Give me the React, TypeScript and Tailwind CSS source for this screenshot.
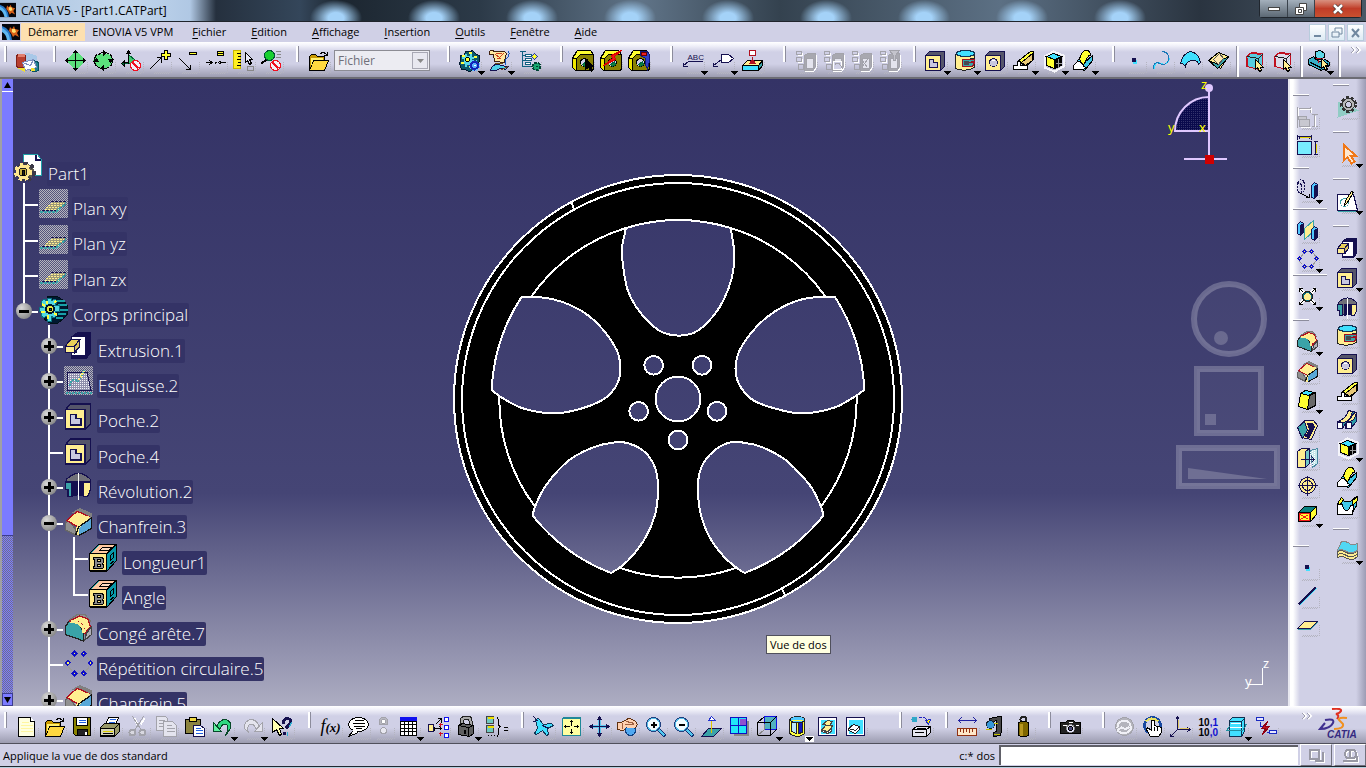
import type { ReactNode } from 'react';
import clsx from 'clsx';

const NAVY = '#15104f';
const CREAM = '#ffee90';
const CYAN = '#40e0ff';
const TEAL = '#3aa3a8';
const GREY = '#a3a3ab';

type PProps = { d: string; f?: string; s?: string; w?: number };

function P({ d, f = 'none', s = '#000', w = 1 }: PProps) {
    return <path d={d} fill={f} stroke={s} strokeWidth={w} />;
}

const spanner = (
    <>
        <P d="M0 7L5 0h13l3 4v15l-2 1H3l-3-3z" f="#8a8200" />
        <P d="M5 0h13l3 4H8L4 8H0z" f="#ffff30" />
        <P d="M0 8h4v12H3l-3-3z" f="#f0e800" />
        <circle cx="12" cy="12" r="4" fill="#d0d0e6" stroke="#000" />
        <P d="M10 14l4-3 1 3-3 2z" f="#10803c" s="#064" />
    </>
);

const greyTree = (
    <>
        <P d="M1 1h5v3H1zM1 7h5v4H1zM3 14h5v5H3z" s={GREY} />
        <P d="M9 5l3-2h8v13l-3 4h-8z" f="#a8a8b0" s={GREY} />
        <P d="M11 8h7v10h-7z" f="#e4e4ee" s={GREY} />
        <P d="M7 2v3H2M7 8v4H2M21 4v13l-3 4h-9" s="#fff" />
    </>
);

const dots = (
    <>
        <P d="M7 3h7M16 5l3 4M18 13l-3 4M8 18h5M5 16l-3-3M3 9l3-4" s="#9a9a9a" />
        {[[7, 3], [14, 3], [2, 10], [19, 10], [7, 18], [14, 18]].map(([x, y]) => (
            <g key={`${x}-${y}`}>
                <P d={`M${x - 1} ${y}l1-1 1 1-1 1z`} s="#1010c8" w={2} />
                <path d={`M${x - 0.5} ${y - 0.5}h1v1h-1z`} fill="#ffff50" />
            </g>
        ))}
    </>
);

const folder = (
    <>
        <P d="M1 20V6l2-2h4l2 2h7v4" f="#c89800" />
        <P d="M1 20L5 10h15l-4 10z" f="#ffd840" />
        <P d="M2 7h12v2H5L2 17z" f="#fff070" s="none" />
        <P d="M12 3c3-2 5-1 7 2M19 1v4h-4" />
    </>
);

const box = (fill: string) => (
    <>
        <P d="M2 6l5-4 11 1v11l-3 5-13-3z" f={fill} s="#c01020" />
        <P d="M3 6l11 2v10M14 8l4-4" s="#222" />
        <P d="M3 7v9M7 3l10 1" s="#c01020" />
        <P d="M11 9v10l2-2 2 4 2-1-1-3h3z" f={CREAM} />
    </>
);

const page = (
    <>
        <P d="M1 1h18v18H1z" f="#fff" s={NAVY} />
        <P d="M3 3h14v14H3z" f={CYAN} s="none" />
    </>
);

const noEntry = (
    <>
        <circle cx="14" cy="15" r="5" fill="#f4f0f8" stroke="#f01020" />
        <P d="M11 12l6 6" s="#f01020" w={2} />
    </>
);

const magnifier = (
    <>
        <P d="M12 12l8 8" s="#103070" w={4} />
        <P d="M12 12l7 7" s="#50c8f0" w={2} />
        <circle cx="8" cy="8" r="7" fill="#f4fbff" stroke="#204080" />
        <circle cx="8" cy="8" r="6" fill="none" stroke="#58c0e8" />
    </>
);

const icons: Record<string, ReactNode> = {
    catalogue: (
        <>
            <P d="M4 6l6-4 10 3v5H6z" f="#a8c8e8" s="none" />
            <P d="M0 5q5-3 9 0v11q-4 3-9 0z" f="#b84030" s="#802018" />
            <ellipse cx="5" cy="5" rx="4" ry="2" fill="#e08070" />
            <P d="M14 12q4-3 8 0v8q-4 2-8 0z" f="#208090" s="#0a5060" />
            <P d="M6 12l11-3 3 8-11 3z" f="#fff" s="#8090c0" />
            <P d="M6 12l8 3 3-6" s="#8090c0" />
            <P d="M1 18l7 3v-4zM14 17h3l2 3h-5z" f="#f0e030" s="none" />
        </>
    ),
    pan: (
        <>
            <P d="M10 0l10 10-10 10L0 10z" f="#5be07c" s="none" />
            <P d="M10 0v20M0 10h20" />
            <P d="M8 2l2-2 2 2zM8 18l2 2 2-2zM2 8l-2 2 2 2zM18 8l2 2-2 2z" f="#000" />
        </>
    ),
    turn: (
        <>
            <P d="M5 3h10l5 7-5 7H5l-5-7z" f="#5be07c" s="none" />
            <P d="M4 5q6-6 12-1M17 4q4 6 0 12M16 16q-6 5-12 0M3 16q-4-6 0-12" />
            <P d="M10 0l2 3-2 2zM15 9h5l-3 3zM10 20l-2-3 2-2zM0 11h5L3 8z" f="#000" />
        </>
    ),
    noFly: (
        <>
            <P d="M7 4v8L2 13h16L8 5z" f="#40c870" s="#063" />
            <P d="M7 0v13M5 3l2-3 2 3zM0 12h7M3 10l-3 3 3 3z" f="#063" />
            {noEntry}
        </>
    ),
    zoomPlus: <><P d="M0 19L12 7M7 7h5v5" /><P d="M12 3h3V0h3v3h3v3h-3v3h-3V6h-3z" f="#ffff30" /></>,
    zoomMinus: <><P d="M2 8l11 11M8 19h5v-5" /><P d="M12 2h7v2h-7z" f="#ffff30" /></>,
    approach: <><P d="M0 12h6M4 10l3 2-3 2M20 12h-6M16 10l-3 2 3 2M9 12h2M10 11v2" /><P d="M12 1h6v2h-6zM12 3h6v2h-6z" f="#ffff30" /></>,
    ruler: (
        <>
            <P d="M0 0h7v18H0z" f="#fff020" s="#c8b800" />
            <P d="M3 3h4M4 6h3M3 9h4M4 12h3M3 15h4" />
            <P d="M12 2v10l2-2 2 4 2-1-2-4h3z" f="#e8e8f8" />
            <P d="M14 16h6v4h-6z" s="#888" />
        </>
    ),
    greenZoom: (
        <>
            <circle cx="8" cy="5" r="5" fill="#18d030" stroke="#053" />
            <P d="M5 9l-5 4" w={2} />
            <P d="M14 1h5M15 4h4M14 7h5" s="#888" />
            {noEntry}
        </>
    ),
    folder,
    gears: (
        <>
            <P d="M6 1h5l2-1 4 4 3 1v6l-4 5-1 4-6 1-3-2H2l-2-6 1-3V5h4z" f="#0c5868" s="#021830" />
            <P d="M5 3h2v2h3V3h2v3h2v2h-2v3h2v2h-2v3h-2v-2H7v2H5v-3H2v-2h2V8H2V6h3z" f="#58d8e8" s="none" />
            <P d="M2 5h3M9 2h3M1 12h3M9 16h3M14 6h3" s="#ffff40" w={2} />
            <circle cx="8" cy="9" r="2" fill="#ffff30" stroke="#000" />
            <circle cx="15" cy="15" r="5" fill="#1828c0" stroke="#60c0ff" strokeDasharray="2 2" />
            <circle cx="15" cy="15" r="3" fill="#58b0ff" stroke="#1020b0" />
            <P d="M14 15h2" s="#fff" />
        </>
    ),
    scroll: (
        <>
            <P d="M0 1q2-2 5 0h9q4 0 2 5l-1 6-10-1-1-7H0z" f="#ffe8a0" s="#402010" />
            <P d="M6 4l4 3 4-4M7 8h4M6 3h6" s="#d04020" />
            <P d="M1 20q2-7 8-6 5 2 10 2l-3 3q-6-2-9 1z" f="#50d0e8" s={NAVY} />
            <P d="M12 19l7-3M5 13h8" s="#705010" />
            <P d="M19 1q2 4-3 8v5" s="#1858c0" />
        </>
    ),
    treeGear: (
        <>
            <P d="M0 1h6M3 1v15h8M3 5h4M3 10h4" s="#106080" />
            <P d="M6 4h6v2H6zM6 8h6v2H6zM6 12h5v2H6z" f="#fff" s="#106080" />
            <P d="M15 3l3 3-3 3-3-3z" f="#ffff30" s="#2030b0" />
            <circle cx="17" cy="16" r="4" fill="#18a870" stroke="#043" strokeWidth="2" strokeDasharray="3 1" />
            <P d="M16 16h2" s="#043" />
        </>
    ),
    nutArrow: <>{spanner}<P d="M13 9v10l3-2 3 4 1-1-2-4h3z" f="#000" /></>,
    nutFlash: <>{spanner}<P d="M21 0L11 5l1 3-9 7 12-6-1-3z" f="#f01818" s="#e00000" /></>,
    nutKnife: <>{spanner}<P d="M12 1q9-2 9 5t-2 13l-2-5V8l-5-3z" f="#3040c8" s="#101878" /><P d="M13 2h5v3h-5z" f="#f02020" s="#600" /></>,
    textNote: (
        <>
            <text x="5" y="9" fontSize="8" fontFamily="Liberation Sans" fill={NAVY}>ABC</text>
            <P d="M20 11H6l-5 4M1 12v4h4" s={NAVY} />
        </>
    ),
    flagNote: <><P d="M9 4h7l5 4-5 4H9z" f="#fff" s={NAVY} /><P d="M9 9L1 15M1 12v4h4" s={NAVY} /></>,
    datum: (
        <>
            <P d="M7 0h6v5H7z" f="#fff" s="#b01020" />
            <P d="M10 6v3" s="#b01020" />
            <P d="M0 15l5-5h15l-4 5z" f={CREAM} />
            <P d="M7 13h6l-3-4z" f="#b01020" s="#b01020" />
            <P d="M0 15h16v5H0z" f={CYAN} />
            <P d="M16 15l4-5v5l-4 5z" f={TEAL} />
        </>
    ),
    greyTree,
    greyTree2: <>{greyTree}<P d="M10 11h8v8h-8z" f="#d0d0e6" s="#fff" /><P d="M11 15q3-5 6 0t3 4" s={GREY} /></>,
    greyTree3: <>{greyTree}<P d="M10 9l6 8M16 9l-6 8" s={GREY} /></>,
    greyTree4: <>{greyTree}<P d="M10 0h10l-4 5v5h-2V5z" f="#c4c4cc" s={GREY} /></>,
    pocket: (
        <>
            <P d="M1 4l3-3h15v15l-3 3z" f="#55556a" s={NAVY} />
            <P d="M0 5h15v15H0z" f={CREAM} s={NAVY} />
            <P d="M4 9h4v3h4v5H4z" f="#c8c8e0" s={NAVY} />
        </>
    ),
    groove: (
        <>
            <P d="M0 4h19v4l-8 1v5l8-1v4q-9 5-19 1z" f={CREAM} s="#222" />
            <ellipse cx="10" cy="3" rx="9" ry="3" fill={CYAN} stroke="#135" />
            <P d="M7 9h12v2l-6 1h6l-2 4H7z" f={TEAL} s="#a01020" />
            <P d="M8 10h5v4H8z" f="#484850" s="none" />
        </>
    ),
    hole: (
        <>
            <P d="M1 4l3-3h15v15l-3 3z" f="#55556a" s={NAVY} />
            <P d="M0 5h15v15H0z" f={CREAM} s={NAVY} />
            <circle cx="8" cy="12" r="4" fill="#c8c8e0" stroke={NAVY} />
            <P d="M6 10h3" s="#fff" />
        </>
    ),
    stiffener: (
        <>
            <P d="M4 11L17 1h3v8l-7 7z" f="#ffff40" />
            <P d="M8 12L19 3v7l-7 5z" f="#e8c878" />
            <P d="M0 19v-4h4v-4h3v4h7v4z" f="#fff" />
        </>
    ),
    cube: (
        <>
            <P d="M1 6l9-5 10 4v11l-9 5-10-4z" s="#f4f4fa" w={2} />
            <P d="M3 6l7-3 8 3-7 3z" f={CYAN} />
            <P d="M3 6l8 3v9l-8-3z" f="#ffff30" />
            <P d="M11 9l7-3v9l-7 3z" f="#000" />
            <P d="M12 13h6M15 8v9" s="#999" />
        </>
    ),
    loft: (
        <>
            <P d="M0 16L8 5l3 7 8-7v5L11 20z" f="#40c8e8" />
            <P d="M6 9q2-9 7-9 4 0 4 5-2-1-4 4t-4 5z" f="#ffff30" />
            <P d="M0 15l4-4q5 0 6 5l3 1-3 2H0z" f="#fff" />
        </>
    ),
    point: <><P d="M10 10h2v3H9z" f={CYAN} s={CYAN} /><P d="M8 8h3v3H8z" f={NAVY} s={NAVY} /></>,
    spline: <><P d="M2 18q0-5 4-6l6 2q4-2 5-6" s={CYAN} /><P d="M1 19q-1-6 4-7 5 3 9 1 3-3 2-8-2-4-7-4" s="#1878b8" /></>,
    surface: <P d="M0 13Q2 3 10 1q9 2 10 11l-2 2q-1-5-7-4t-6 7q-1-4-5-4z" f={CYAN} s="#113" />,
    diamondBox: (
        <>
            <P d="M0 10L10 2l10 4-8 12z" f={CREAM} />
            <P d="M0 10l9 8 11-11-5 1-5 6z" f={TEAL} />
            <P d="M5 9l6-6 4 5-5 6z" f="#ffe8b0" s="#555" />
        </>
    ),
    boxCyan: box('#58cce0'),
    boxGrey: box('#dcdcea'),
    assembly: (
        <>
            <P d="M0 9l5-3 6 5 6-2 4 3v3l-8 5-13-6z" f="#38b0c8" />
            <P d="M2 12l10 5 8-4M6 8l6 4" />
            <P d="M7 1l5-1 4 3v4l-5 2-4-2z" f="#60d8e8" />
            <P d="M7 8h7M10 9v3" s="#c01020" />
            <P d="M13 8v10l2-2 2 4 2-1-2-4h3z" f={CREAM} />
        </>
    ),
    pad: (
        <>
            <P d="M5 4l4-3h10v15l-3 4H5z" f={NAVY} s={NAVY} />
            <P d="M5 4h10v14H5z" f="#fff" s="none" />
            <P d="M0 11l4-5h7l-3 5v5H0z" f="#e8cf58" s={NAVY} />
            <P d="M0 11h7v5H0z" f={CREAM} s={NAVY} />
            <P d="M7 11l4-5v5l-4 5z" f="#d8c060" s={NAVY} />
        </>
    ),
    shaft: (
        <>
            <P d="M1 5q9-9 18 0v3h-4v9h-4V7H8v10H5V8H1z" f="#707078" s={NAVY} />
            <P d="M0 7h5v11H2v-5H0z" f={TEAL} s={NAVY} />
            <P d="M6 6h7l1 12-3-2-3 2H6z" f={NAVY} s="none" />
            <P d="M14 7h5v6l-2 5h-3z" f={CREAM} s={NAVY} />
            <P d="M10 0v21" s="#fff" />
        </>
    ),
    rib: (
        <>
            <P d="M0 12q8-2 11-11l8 2v9l-6 7H8v-5l-3 5H0z" f="#2a9aa8" s={NAVY} />
            <P d="M0 12q8-2 11-11l4 1Q13 12 6 13z" f={CREAM} s={NAVY} />
            <P d="M9 12q5-3 7-8l3-1q-1 7-6 9z" f={CREAM} s={NAVY} />
            <P d="M0 13h5v6H0zM9 13h5v6H9z" f="#fff" s={NAVY} />
        </>
    ),
    removeLoft: (
        <>
            <P d="M0 8l4-6 3 4h6l6-5v9l-5 9H0z" f="#40c8e8" />
            <P d="M0 19V9l5 0q1 6 4 6t4-5h3l-1 9z" f="#fff" />
            <P d="M0 8l4-6 2 2-3 5zM15 5l5-4v4l-5 5z" f="#ffff30" />
        </>
    ),
    thick: (
        <>
            <P d="M0 11q5-2 9 1t11-1v5q-5 5-10 2t-10-1z" f={CREAM} s="#555" />
            <P d="M0 14q5-2 9 1t11-1" s="#555" />
            <P d="M0 10l4-9q6 0 8 2t8 0v7q-6 4-11 1t-9-1z" f="#50d8f4" s="#888" />
        </>
    ),
    gearPlane: (
        <>
            <P d="M0 5l22 9-22 7z" f="#90ccc4" s="none" />
            <circle cx="11" cy="8" r="7" fill="none" stroke="#333" strokeWidth="3" strokeDasharray="3 2" />
            <circle cx="11" cy="8" r="6" fill="#b8b8b8" stroke="#333" />
            <circle cx="11" cy="8" r="3" fill="#d0d0e6" stroke="#333" />
        </>
    ),
    select: <P d="M6 1v16l4-3 4 6 3-2-4-6h5z" f="#ffe8d0" s="#f07818" w={2} />,
    sketch: (
        <>
            <P d="M0 4h16l4 16H0z" f="#fff" s={NAVY} />
            <P d="M0 21h21" s={TEAL} />
            <circle cx="7" cy="12" r="4" fill="none" stroke={TEAL} />
            <P d="M7 15l1-5 6-9 2 1-6 10z" f={CREAM} />
        </>
    ),
    greyDims: (
        <>
            <P d="M0 0v21M13 0v6M0 2h13M14 8h6M14 20h6M17 8v12" s={GREY} />
            <P d="M1 10h8v3H1zM2 13h10v7H2z" f="#c8c8d0" s={GREY} />
            <P d="M1 1v8M14 1v5M2 3h11M3 21h10M18 9v11" s="#fff" />
        </>
    ),
    dims: (
        <>
            <P d="M0 0v5M14 0v5M0 2h14M2 1v3M12 1v3M16 7h4M16 20h4M18 7v13" s={NAVY} />
            <P d="M0 7h14v13H0z" f="#78ecff" s={NAVY} />
            <P d="M19 9v9M2 3h11" s="#e0d000" />
        </>
    ),
    translate: (
        <>
            <path d="M0 3l3-3 4 2v9l-3 3-4-2zM4 5v9M0 3l4 2 3-3" fill="none" stroke={NAVY} strokeDasharray="2 1" />
            <P d="M3 14l9 4M12 14v4H8" />
            <P d="M14 6l3-3 3 2v11l-3 3-3-1z" f="#50c8ff" s={NAVY} />
            <P d="M17 7l3-2v11l-3 3z" f={NAVY} s={NAVY} />
        </>
    ),
    mirror: (
        <>
            <P d="M0 4l3-3 3 2v9l-3 3-3-2z" f="#50c8ff" s={NAVY} />
            <P d="M3 5l3-2v9l-3 3z" f={NAVY} s={NAVY} />
            <P d="M7 8l9-8v11l-9 8z" f={CREAM} s={TEAL} />
            <P d="M14 9l3-3 3 2v9l-3 3-3-2z" f="#50c8ff" s={NAVY} />
            <P d="M17 10l3-2v9l-3 3z" f={NAVY} s={NAVY} />
        </>
    ),
    dots,
    scale: (
        <>
            <P d="M2 2l16 16M18 2L2 18" s="#fff" w={3} />
            <P d="M2 2l4 4M18 2l-4 4M2 18l4-4M18 18l-4-4M2 5V2h3M15 2h3v3M2 15v3h3M15 18h3v-3" />
            <circle cx="10" cy="10" r="5" fill="#087080" stroke="#222" />
            <circle cx="10" cy="10" r="3" fill={CREAM} stroke={CREAM} />
        </>
    ),
    fillet: (
        <>
            <P d="M3 4l6-4h6l4 5-2 3z" f="#909090" s="#777" />
            <P d="M0 9l3-4 7 1 4 8v6L0 15z" f={TEAL} s="#222" />
            <P d="M3 5l8-4 6 2 2 6-4 5q-1-8-7-9z" f={CREAM} s="#b01020" />
            <P d="M14 14q0-6-5-8l-5-1" s={CREAM} w={2} />
            <P d="M15 19l5-4v-6l-4 5z" f="#b0b0b8" s="#444" />
        </>
    ),
    chamfer: (
        <>
            <P d="M6 3l5-3 9 4v3z" f="#808080" s="#808080" />
            <P d="M0 11l2-3 6 8v4l-8-4z" f="#909090" s="#666" />
            <P d="M1 9l8-7 9 4-8 8z" f={CREAM} s="#b01020" />
            <P d="M10 14l10-7v8l-9 5-3-1z" f="#58a8d8" s="#111" />
            <P d="M18 6l-9 9v5" s={CREAM} w={2} />
            <P d="M8 20l2-6 10-7" s="#111" />
        </>
    ),
    draft: (
        <>
            <P d="M3 4l5-3 9 2-6 3z" f={CYAN} />
            <P d="M3 4l9 2-2 14-9-3z" f="#ffff30" />
            <P d="M12 6l6-3v13l-8 4z" f="#686868" />
        </>
    ),
    shell: (
        <>
            <P d="M0 8l7-7h9l4 5-6 14-10-2z" f={CREAM} s={NAVY} />
            <P d="M0 8l7-6 3 9-5 8z" f={TEAL} s={NAVY} />
            <P d="M10 4h5l2 3-5 11-4-1 4-7z" f={NAVY} s={NAVY} />
        </>
    ),
    thickness: (
        <>
            <P d="M0 4l4-3h8l-4 3v16H0z" f={CREAM} s={NAVY} />
            <P d="M8 4l4-3v15l-4 4z" f="#70c8c8" s={NAVY} />
            <P d="M13 3l7-2v15l-5 4z" f="#c8e8ec" s="#4888a0" />
            <path d="M13 4v15M15 3v16M17 2v16" stroke="#fff" strokeDasharray="1 1" />
            <P d="M3 12h14M14 9l3 3-3 3" s={NAVY} />
        </>
    ),
    target: (
        <>
            <circle cx="10" cy="10" r="8" fill={CREAM} stroke={NAVY} />
            <circle cx="10" cy="10" r="5" fill="none" stroke={NAVY} />
            <P d="M10 0v20M0 10h20" s={NAVY} />
        </>
    ),
    deleteFace: (
        <>
            <P d="M1 9l6-6h12l-6 6z" f="#088080" />
            <P d="M13 9l6-6v8l-6 7z" f="#ffff30" />
            <P d="M1 9h12v9H1z" f="#ffff30" />
            <P d="M3 11l8 5M11 11l-8 5M2 10h10v7H2z" s="#f01818" />
        </>
    ),
    line: <><P d="M2 20L19 3" s={CYAN} /><P d="M1 19L18 2" s={NAVY} w={2} /></>,
    plane: <><P d="M0 15l7-7h13l-7 7z" f={CREAM} s={NAVY} /><P d="M0 16h13l7-7" s={TEAL} /></>,
    newDoc: <><P d="M2 1h12l4 4v15H2z" f="#ffffe0" /><P d="M14 1v4h4" f="#fff" /><P d="M5 6h7M4 9h12M4 12h12M4 15h12" s="#fff6a0" /></>,
    save: (
        <>
            <P d="M1 1h17v18H3l-2-2z" f="#8c8400" />
            <P d="M4 1h11v8H4z" f="#fff" />
            <P d="M6 4h7M6 6h7" s="#2060e0" />
            <P d="M5 13h10v6H5z" f="#222" />
            <P d="M12 15h2v3h-2z" f="#fff" s="none" />
        </>
    ),
    print: (
        <>
            <P d="M5 8l3-7h10l-3 7z" f="#fff" />
            <P d="M9 3h6M8 6h6" s="#2060e0" />
            <P d="M0 11l4-4h15v8l-5 5H0z" f="#989868" />
            <P d="M0 12h14v7H0zM14 12l5-5" f="#d8d8b8" />
            <P d="M2 15h10" s="#e0d000" />
            <P d="M2 17h10" />
        </>
    ),
    cut: (
        <>
            <P d="M6 2l3 6M16 2l-4 6" s="#fff" w={2} />
            <P d="M4 0l9 14M15 0L6 14" s={GREY} />
            <circle cx="4" cy="16" r="3" fill="#d8d8e0" stroke={GREY} strokeWidth="2" />
            <circle cx="14" cy="16" r="3" fill="#d8d8e0" stroke={GREY} strokeWidth="2" />
        </>
    ),
    copy: (
        <>
            <P d="M0 0h9l2 2v12H0z" f="#e4e4ee" s={GREY} />
            <P d="M2 4h6M2 7h6M2 10h6" s={GREY} />
            <P d="M7 5h9l4 4v11H7z" f="#e4e4ee" s={GREY} />
            <P d="M10 9h5M10 12h8M10 15h8" s={GREY} />
        </>
    ),
    paste: (
        <>
            <P d="M1 3h15v14H1z" f="#8c8440" />
            <P d="M5 1h7v4H5z" f="#f0d840" />
            <P d="M9 9h7l4 3v8H9z" f="#fff" s={NAVY} />
            <P d="M11 12h5M11 14h7M11 17h7" s="#2060e0" />
        </>
    ),
    undo: <><P d="M4 10q3-7 9-7 7 2 5 9l-5 7q4-8 1-11-4-2-7 5" f="#30d880" s="#064828" /><P d="M1 6v9h8z" f="#60f0a0" s="#064828" /></>,
    redo: <><P d="M17 10q-3-7-9-7-7 2-6 9l4 4q-2-6 1-8 4-2 7 5" f="#e4e4ee" s={GREY} /><P d="M20 6v9h-8z" f="#e4e4ee" s={GREY} /></>,
    help: (
        <>
            <P d="M0 2v14l4-3 3 6 2-1-2-6h4z" f="#ffffb0" />
            <P d="M11 7q0-5 4-5 5 1 2 6l-4 4M12 15v3" s={NAVY} w={3} />
            <P d="M19 5q0 3-3 6M15 15v4" s="#30b0d0" />
        </>
    ),
    formula: <text x="0" y="15" fontSize="18" fontStyle="italic" fontFamily="Liberation Serif" fill="#000">f<tspan fontSize="13" fontWeight="bold">(x)</tspan></text>,
    comment: <><P d="M5 14l-5 6 10-4" f="#fff" /><ellipse cx="10" cy="8" rx="10" ry="7" fill="#fff" stroke="#000" /><P d="M6 4h9M4 7h12M5 10h11M7 12h6" /><P d="M5 13l4 2" s="#fff" w={2} /></>,
    greyLight: <><P d="M7 8V3l2-2h4l2 2v5z" f="#b8b8c0" s={GREY} /><circle cx="11" cy="5" r="2" fill="#fff" stroke={GREY} /><circle cx="11" cy="14" r="3" fill="#e8e8f0" stroke={GREY} /></>,
    table: <><P d="M2 1h16v3H2z" f="#1010f0" s="#1010f0" /><P d="M2 5h16v14H2zM6 5v14M10 5v14M14 5v14M2 8h16M2 12h16M2 15h16" f="#fff" /></>,
    relations: (
        <>
            <P d="M0 8h5v7H0z" f={CREAM} s={NAVY} />
            <P d="M7 8l6-6M13 6V2h-4M6 12h7M11 10l2 2-2 2M6 10v4" />
            <P d="M16 1h4v4h-4zM16 9h4v4h-4zM16 17h4v4h-4z" f="#fff" s="#1010f0" />
            <P d="M12 6v4M10 8h4M12 15v4M10 17h4" s="#d01020" />
        </>
    ),
    lock: (
        <>
            <P d="M5 9V4q1-3 5-3t4 3v5" s="#222" w={4} />
            <P d="M5 9V4q1-3 5-3t4 3v5" s="#aaa" w={2} />
            <P d="M2 9l4-2 11 2v8l-4 3-11-2z" f="#606060" />
            <P d="M2 9l10 2v9M12 11l5-2" />
            <P d="M8 13v4" w={2} />
        </>
    ),
    braces: (
        <>
            <P d="M0 0h7v7H0zM0 9h7v7H0z" f="#70c8c0" s="#444" />
            <P d="M1 1h6M1 10h6" s="#f0e000" w={2} />
            <P d="M10 1q2 0 2 5 0 4 2 4-2 0-2 5 0 5-2 5M17 11h4M17 14h4M1 19h1M4 19h1M7 19h1" />
        </>
    ),
    fly: (
        <>
            <P d="M2 3l3-1 5 6 8-1 2 2-6 3 1 6-2 1-4-5-6 4-2-1 3-5z" f={CYAN} s="#103858" />
            <P d="M0 0l4 4M0 5l5-1M9 9l6 3" s={NAVY} />
        </>
    ),
    fitAll: (
        <>
            <P d="M1 2h18v17H1z" f="#ffffa0" s="#208898" />
            <P d="M1 1h18" s="#208898" />
            <P d="M10 4v5M10 12v5M3 10h5M12 10h5M9 5l1-1 1 1zM9 16l1 1 1-1zM4 9l-1 1 1 1zM16 9l1 1-1 1z" f="#000" />
        </>
    ),
    panBlue: (
        <>
            <P d="M10 1v18M1 10h18" s="#60c8f0" w={3} />
            <P d="M10 1v18M1 10h18" s={NAVY} />
            <P d="M8 3l2-3 2 3zM8 17l2 3 2-3zM3 8l-3 2 3 2zM17 8l3 2-3 2z" f={NAVY} s={NAVY} />
        </>
    ),
    hand: (
        <>
            <P d="M0 6h4l7-4q7 1 9 6-2 5-8 4l-7 2-5-1z" f="#ffd0b0" s="#603010" />
            <P d="M7 8h9M9 5l8 2M5 6v6" s="#a06040" />
            <circle cx="13" cy="14" r="5" fill="#50a8f0" stroke="#104080" />
            <P d="M9 10h8" s="#ffd0b0" w={3} />
        </>
    ),
    zoomIn: <>{magnifier}<P d="M5 8h6M8 5v6" w={2} /></>,
    zoomOut: <>{magnifier}<P d="M5 8h6" w={2} /></>,
    normal: <><P d="M0 20l7-8h13l-8 8z" f={TEAL} s={NAVY} /><P d="M10 16V4" s="#e0c800" /><P d="M7 4l3-4 4 4z" f="#fff" s="#2030d0" /></>,
    multiView: (
        <>
            <P d="M5 5h14v14H5z" f="#888" s="#888" />
            <P d="M1 1h16v16H1z" f="#20e8f8" s="#1010c0" />
            <P d="M10 2h6v7h-6z" f="#9050d0" s="none" />
            <P d="M9 1v16M1 9h16" s="#1010c0" />
        </>
    ),
    isoView: (
        <>
            <P d="M7 0h12v13H7z" f="#50b0c0" s="#1010e0" />
            <P d="M0 6h13v13H0zM0 6l7-6M13 6l6-6M13 19l6-6" />
            <P d="M0 19l7-6v-6" s="#888" />
        </>
    ),
    cylinder: (
        <>
            <P d="M2 3v14q8 6 15 0V3z" f="#ffff40" s="#222" />
            <P d="M4 6h5v11l-5-2z" f="#b8e8ff" s="#222" />
            <P d="M11 6h4v10l-4 1z" f="#1018c0" s="#222" />
            <ellipse cx="10" cy="3" rx="7" ry="3" fill="#50c8ff" stroke="#222" />
            <P d="M4 4h11" s="#ffff40" />
        </>
    ),
    hideShow: <>{page}<P d="M4 14l4-5h7l-3 6zM5 8l5-4 5 1-3 4z" f={CREAM} s="#444" /><P d="M4 13l5 3 5-4v3l-4 2-6-2z" f="#fff" s="#444" /></>,
    swapSpace: <>{page}<P d="M3 12l5-4 6 2-4 4z" f="#fff" s="#222" /><P d="M3 12l7 2 4-4v3l-4 4-7-3z" f="#fff" s="#222" /></>,
    printBall: (
        <>
            <circle cx="3" cy="3" r="3" fill="#30a8c8" />
            <path d="M8 1q7-1 9 5" fill="none" stroke="#2020c0" strokeDasharray="2 1" />
            <P d="M14 4l3 4 2-5z" f="#ffee00" s="#2030c0" />
            <P d="M1 13l4-3h14v6l-4 4H1z" f="#e8e8f0" />
            <P d="M1 13h14v7M15 13l4-3M5 12h9M3 16h9" />
        </>
    ),
    measure: <><P d="M1 4h18M4 1L1 4l3 3M16 1l3 3-3 3" s="#2020a0" /><P d="M0 12h19v7H0z" f="#ffe8c8" s="#903010" /><P d="M3 12v3M6 12v4M9 12v3M12 12v4M15 12v3" s="#903010" /></>,
    caliper: (
        <>
            <P d="M4 2l10-2h2v14l-1 5-7 1v-4l3-1V4L4 6z" f="#484848" />
            <circle cx="5" cy="8" r="4" fill="#3898d8" stroke="#123" />
            <P d="M8 7h4M0 13h6M8 18h6" s="#c0c000" />
        </>
    ),
    weight: <><circle cx="10" cy="3" r="3" fill="none" stroke="#222" strokeWidth="2" /><P d="M5 6q5-2 10 0v13q-5 3-10 0z" f="#806800" /><P d="M6 7h3v12H6z" f="#b89820" s="none" /></>,
    camera: (
        <>
            <P d="M0 6h5l2-2h6l2 2h5v11H0z" f="#222" />
            <circle cx="10" cy="12" r="4" fill="#e8e8ff" stroke="#888" />
            <circle cx="10" cy="12" r="2" fill="#505080" stroke="#000" />
            <P d="M2 9h4M8 6h4M15 9h3" s="#fff" />
        </>
    ),
    update: (
        <>
            <circle cx="10" cy="10" r="9" fill="#b4b4bc" stroke={GREY} />
            <P d="M3 11q0-7 8-7 6 2 4 6-3 4-8 1l-3 2M17 9q0 7-8 8-5-1-6-4" s="#f0f0f6" w={2} />
        </>
    ),
    manual: (
        <>
            <circle cx="10" cy="9" r="8" fill="none" stroke="#1848a0" strokeWidth="3" />
            <P d="M3 5q6-6 13 0" s="#e8e060" w={2} />
            <P d="M8 20l-4-7 1-2 4 3V4h3v5l7 2v5l-3 4z" f="#fff" />
            <P d="M12 10v4M15 10v4" />
        </>
    ),
    axis: <><P d="M7 13V0M7 13h13M7 13l-7 7M5 3l2-3 2 3M17 11l3 2-3 2M0 17v3h3" s={NAVY} /><P d="M9 12h9M8 3v8" s="#e0c860" /></>,
    tolerance: (
        <text fontSize="10" fontFamily="Liberation Sans" fontWeight="bold">
            <tspan x="0" y="9">10</tspan><tspan fill="#1010d0">,1</tspan>
            <tspan x="0" y="19">10</tspan><tspan fill="#1010d0">,0</tspan>
        </text>
    ),
    section: (
        <>
            <P d="M3 4l3-3h12v14l-3 5H3z" f={CYAN} s="#103050" />
            <P d="M15 5v14M3 5h12l3-3" s="#103050" />
            <P d="M3 11h12M4 7h10" s="#fff" />
            <P d="M3 10l-3 4h16l4-6h-2" s="#2090a0" />
        </>
    ),
    link: <><P d="M0 1h7v3H0zM13 14h7v3h-7z" f="#e8e8ff" s="#1828c0" /><P d="M4 5v5h4M10 16h3" s="#1828c0" /><P d="M11 5l-6 7h4l-3 6 7-8h-4z" f="#c01020" s="#900010" /></>,
    partDoc: (
        <>
            <P d="M9 0h14l4 5v16H9z" f="#fff" s="#20a0a8" />
            <P d="M22 1v5h5" s={NAVY} w={2} />
            <circle cx="12" cy="18" r="8" fill="#5c584c" stroke="#3a3848" strokeWidth="4" strokeDasharray="4 3" />
            <circle cx="9" cy="18" r="7" fill="#ffe890" stroke="#ffe890" strokeWidth="4" strokeDasharray="3 3" />
            <circle cx="9" cy="18" r="4" fill="#c8b040" stroke="#222" />
            <P d="M8 16h2v5H8z" f="#222" />
        </>
    ),
    bodyGear: (
        <>
            <P d="M9 0h8l4 2 4 3 3 4v10l-4 4-5 4h-8l-6-4z" f="#001830" s="#001018" />
            <P d="M18 5h8M19 9h9M19 14h10M19 18h8M17 22h7" s="#18a0a8" w={2} />
            <P d="M8 2h4v3l4-2 2 3-2 3h4v6h-4l2 4-3 3-3-2v5H8v-5l-4 2-2-3 2-4H0v-4h4L2 6l3-3 3 2z" f="#50d8e4" s="#087080" />
            <P d="M8 5v3M3 8l3 2M2 16h4M15 7l2-2M15 17l3 2M9 19v4" s="#ffff40" w={2} />
            <circle cx="11" cy="13" r="4" fill="#e8e840" stroke="#001830" strokeWidth="2" />
            <P d="M10 12h2v2h-2z" f="#087080" />
        </>
    ),
};

// coarse checkerboard used behind entities that are hidden in the 3D view
const dither = 'bg-[repeating-conic-gradient(#b4b4bc_0_25%,#54547c_0_50%)] bg-[length:2px_2px]';

const hiddenPlane = (
    <svg viewBox="0 0 29 29" className="size-full" shapeRendering="crispEdges">
        <path d="M5 21l9-8h13l-8 8z" fill="#9c9878" />
        <path d="M6 20.500h14M7 18.500h14M9 16.500h14M12 14.500h13" stroke="#ffee90" strokeWidth="1" strokeDasharray="2 1" />
        <path d="M12 12.500h16M3 21.500h16" stroke={NAVY} strokeDasharray="3 1" />
        <path d="M1 23h16l10-9" fill="none" stroke={TEAL} strokeWidth="2" strokeDasharray="3 1" />
    </svg>
);

const hiddenSketch = (
    <svg viewBox="0 0 29 29" className="size-full" shapeRendering="crispEdges">
        <path d="M3 6h20l4 18H3z" fill="#9090ac" stroke={NAVY} />
        <path d="M4 8.500h19M4 10.500h19M4 12.500h20M4 14.500h20M4 16.500h21M4 18.500h21M4 20.500h21M4 22.500h22" stroke="#f4f4fa" strokeDasharray="1 1" />
        <path d="M6 20q0-8 8-5M14 16l7-13M2 27h26" fill="none" stroke={TEAL} strokeWidth="2" strokeDasharray="2 1" />
        <path d="M15 14l5-9" stroke="#ffee70" strokeWidth="2" strokeDasharray="2 1" />
    </svg>
);

const paramIcon = (
    <svg viewBox="0 0 29 29" className="size-full" shapeRendering="crispEdges">
        <P d="M1 10L10 1h17v17l-9 10H1z" f="#0898a8" />
        <path d="M2 10l8-8h16l-8 8z" fill="#ffc8a0" />
        <path d="M10.500 7.500l3-3h9l-3 3z" fill="#ffdcc0" stroke="#000" />
        <path d="M.5 10.500h17v17H.5z" fill="#ffe888" stroke="#000" />
        <path d="M4.500 14.500h9l1 2v3l-1 1 1 2v2l-1 1h-9v-2h1v-7h-1z" fill="#8c8c8c" stroke="#000" />
        <path d="M8.500 16.500h3v2h-3zM8.500 21.500h3v2h-3z" fill="#ffe888" stroke="#000" />
        <path d="M21.500 12.500l3-3v5l-3 3zM21.500 21l3-3M18 10.500l9-9" fill="none" stroke="#000" />
    </svg>
);

type Tool = [icon: string, label: string, more?: boolean];
type Group = { size: string; tools: Tool[]; rule?: boolean };

function Icon({ name }: { name: string }) {
    return (
        <svg viewBox="0 0 24 24" className="size-6 shrink-0" shapeRendering="crispEdges" aria-hidden="true">
            <path d="M6 22.500h17M5 23.500h15M22.500 12v10" stroke="#b4b4c0" strokeDasharray="1 1" />
            <g transform="translate(.5 .5)">{icons[name]}</g>
        </svg>
    );
}

function Chevrons() {
    return (
        <svg viewBox="0 0 12 8" className="h-2 w-3 shrink-0" fill="none" aria-hidden="true">
            <path d="M2 1l3 3-3 3M7 1l3 3-3 3" stroke="#fff" strokeWidth="2" />
            <path d="M1 1l3 3-3 3M6 1l3 3-3 3" stroke="#9c9cac" />
        </svg>
    );
}

function ToolButton({ tool: [icon, label, more], vertical }: { tool: Tool; vertical?: boolean }) {
    return (
        <button
            type="button"
            aria-label={label}
            className={clsx(
                'relative flex shrink-0 items-start pt-1 pl-1',
                icon === 'greyLight' ? '-ml-1 h-7 w-[26px]' : vertical ? (more ? 'h-[30px] w-7' : 'h-7 w-7') : more ? 'h-7 w-[30px]' : 'h-7 w-7',
            )}
        >
            <Icon name={icon} />
            {more && (
                <svg viewBox="0 0 7 4" className={clsx('absolute top-[25px] left-[23px] h-1 w-[7px]', icon === 'cylinder' && 'bg-white outline-1 outline-white')} shapeRendering="crispEdges">
                    <path d="M0 0h7L3.500 4z" />
                </svg>
            )}
        </button>
    );
}

function ToolGroup({ group }: { group: Group }) {
    return (
        <div className={clsx('flex shrink-0', group.size)}>
            {group.rule ? (
                <div className="mr-px h-8 w-[3px] shrink-0 border-l border-[#8c8c9c] bg-white" />
            ) : (
                <div className="mr-[5px] h-4 w-[3px] shrink-0 border-r border-[#8c8c9c] bg-white" />
            )}
            {group.tools.map((t) => <ToolButton key={t[1]} tool={t} />)}
        </div>
    );
}

function SideGroup({ group }: { group: Group }) {
    return (
        <div className={clsx('shrink-0', group.size)}>
            <div className={clsx('mb-[6px] h-0.5 border-b border-[#8c8c9c] bg-white', group.rule ? 'w-[34px]' : 'w-4')} />
            {group.tools.map((t) => <ToolButton key={t[1]} tool={t} vertical />)}
        </div>
    );
}

const topLeft: Group[] = [
    { size: 'w-[49px]', tools: [['catalogue', 'Catalogue ENOVIA']] },
    {
        size: 'w-[243px]',
        tools: [
            ['pan', 'Déplacer'], ['turn', 'Tourner'], ['noFly', 'Vol désactivé'], ['zoomPlus', 'Avancer'],
            ['zoomMinus', 'Reculer'], ['approach', 'Rapprocher'], ['ruler', 'Règle'], ['greenZoom', 'Loupe'],
        ],
    },
];

const topRight: Group[] = [
    { size: 'w-[113px]', tools: [['gears', 'Corps', true], ['scroll', 'Publication', true], ['treeGear', 'Arbre']] },
    { size: 'w-[110px]', tools: [['nutArrow', 'Pièce active'], ['nutFlash', 'Pièce rapide'], ['nutKnife', 'Pièce coupée']] },
    { size: 'w-[113px]', tools: [['textNote', 'Texte avec repère', true], ['flagNote', 'Note flag', true], ['datum', 'Référence']] },
    { size: 'w-[130px]', tools: [['greyTree', 'Insérer'], ['greyTree2', 'Ajouter'], ['greyTree3', 'Retirer'], ['greyTree4', 'Filtrer']] },
    {
        size: 'w-[199px]',
        tools: [
            ['pocket', 'Poche', true], ['groove', 'Gorge', true], ['hole', 'Trou'],
            ['stiffener', 'Raidisseur', true], ['cube', 'Combinaison', true], ['loft', 'Multi-sections', true],
        ],
    },
    { size: 'w-[124px]', tools: [['point', 'Point'], ['spline', 'Courbe'], ['surface', 'Surface'], ['diamondBox', 'Volume']] },
    { size: 'w-[64px]', rule: true, tools: [['boxCyan', 'Sélection volume'], ['boxGrey', 'Sélection face']] },
    { size: 'w-[38px]', rule: true, tools: [['assembly', 'Assemblage', true]] },
    { size: 'w-[10px]', rule: true, tools: [] },
];

const bottomTools: Group[] = [
    {
        size: 'w-[304px]',
        tools: [
            ['newDoc', 'Nouveau'], ['folder', 'Ouvrir'], ['save', 'Enregistrer'], ['print', 'Imprimer'], ['cut', 'Couper'],
            ['copy', 'Copier'], ['paste', 'Coller'], ['undo', 'Annuler', true], ['redo', 'Rétablir', true], ['help', "Qu'est-ce que c'est ?"],
        ],
    },
    {
        size: 'w-[213px]',
        tools: [
            ['formula', 'Formule'], ['comment', 'Commentaire'], ['greyLight', 'Contrôle'], ['table', 'Table de paramétrage', true],
            ['relations', 'Relations'], ['lock', 'Verrouiller', true], ['braces', 'Ensemble équations'],
        ],
    },
    {
        size: 'w-[378px]',
        tools: [
            ['fly', 'Mode vol'], ['fitAll', 'Centrer tout'], ['panBlue', 'Translation'], ['hand', 'Rotation'], ['zoomIn', 'Zoom avant'],
            ['zoomOut', 'Zoom arrière'], ['normal', 'Vue normale'], ['multiView', 'Multi-vue'], ['isoView', 'Vue isométrique', true],
            ['cylinder', 'Mode de rendu', true], ['hideShow', 'Cacher / Afficher'], ['swapSpace', 'Espace visible'],
        ],
    },
    { size: 'w-[46px]', tools: [['printBall', 'Impression rapide']] },
    { size: 'w-[103px]', tools: [['measure', 'Mesurer entre'], ['caliper', 'Mesurer'], ['weight', 'Inertie']] },
    { size: 'w-[54px]', tools: [['camera', 'Capture']] },
    {
        size: 'w-[199px]',
        tools: [
            ['update', 'Mise à jour'], ['manual', 'Mise à jour manuelle'], ['axis', "Système d'axes"],
            ['tolerance', 'Cotes moyennes'], ['section', 'Section', true], ['link', 'Liens'],
        ],
    },
];

const sideA: Group[] = [
    { size: 'h-[73px]', tools: [['greyDims', 'Cotes 2D'], ['dims', 'Contraintes']] },
    { size: 'h-[41px]', tools: [['translate', 'Translation solide', true]] },
    { size: 'h-[66px]', rule: true, tools: [['mirror', 'Symétrie'], ['dots', 'Répétition circulaire', true]] },
    { size: 'h-[45px]', rule: true, tools: [['scale', 'Facteur échelle', true]] },
    {
        size: 'h-[226px]',
        tools: [
            ['fillet', 'Congé', true], ['chamfer', 'Chanfrein'], ['draft', 'Dépouille', true], ['shell', 'Coque'],
            ['thickness', 'Surépaisseur'], ['target', 'Taraudage'], ['deleteFace', 'Supprimer face', true],
        ],
    },
    { size: 'h-[110px]', tools: [['point', 'Point 3D'], ['line', 'Droite'], ['plane', 'Plan']] },
];

const sideB: Group[] = [
    { size: 'h-[47px]', tools: [['gearPlane', 'Atelier']] },
    { size: 'h-[47px]', tools: [['select', 'Sélectionner', true]] },
    { size: 'h-[47px]', tools: [['sketch', 'Esquisse', true]] },
    {
        size: 'h-[303px]',
        tools: [
            ['pad', 'Extrusion', true], ['pocket', 'Poche', true], ['shaft', 'Révolution'], ['groove', 'Gorge'], ['hole', 'Trou'],
            ['stiffener', 'Raidisseur'], ['rib', 'Nervure'], ['cube', 'Combinaison', true], ['loft', 'Multi-sections'],
            ['removeLoft', 'Retrait multi-sections'],
        ],
    },
    { size: 'h-[50px]', tools: [['thick', 'Surface épaisse', true]] },
];

type Cell = 'blank' | 'through' | 'tee' | 'elbow' | 'plus' | 'minus' | 'minusEnd';
type Row = { label: string; icon: ReactNode; cells: Cell[]; open?: boolean };

const big = (name: string) => (
    <svg viewBox="0 0 22 22" className="size-full" shapeRendering="crispEdges">
        <g transform="translate(1 .5)">{icons[name]}</g>
    </svg>
);

const large = (name: string) => (
    <svg viewBox="0 0 29 29" className="size-full" shapeRendering="crispEdges">{icons[name]}</svg>
);

const treeRows: Row[] = [
    { label: 'Part1', icon: large('partDoc'), cells: [], open: true },
    { label: 'Plan xy', icon: hiddenPlane, cells: ['tee'] },
    { label: 'Plan yz', icon: hiddenPlane, cells: ['tee'] },
    { label: 'Plan zx', icon: hiddenPlane, cells: ['tee'] },
    { label: 'Corps principal', icon: large('bodyGear'), cells: ['minusEnd'], open: true },
    { label: 'Extrusion.1', icon: big('pad'), cells: ['blank', 'plus'] },
    { label: 'Esquisse.2', icon: hiddenSketch, cells: ['blank', 'plus'] },
    { label: 'Poche.2', icon: big('pocket'), cells: ['blank', 'plus'] },
    { label: 'Poche.4', icon: big('pocket'), cells: ['blank', 'tee'] },
    { label: 'Révolution.2', icon: big('shaft'), cells: ['blank', 'plus'] },
    { label: 'Chanfrein.3', icon: big('chamfer'), cells: ['blank', 'minus'], open: true },
    { label: 'Longueur1', icon: paramIcon, cells: ['blank', 'through', 'tee'] },
    { label: 'Angle', icon: paramIcon, cells: ['blank', 'through', 'elbow'] },
    { label: 'Congé arête.7', icon: big('fillet'), cells: ['blank', 'plus'] },
    { label: 'Répétition circulaire.5', icon: big('dots'), cells: ['blank', 'tee'] },
    { label: 'Chanfrein.5', icon: big('chamfer'), cells: ['blank', 'plus'] },
];

function TreeCell({ kind }: { kind: Cell }) {
    if (kind === 'blank') return <div className="w-[25px] shrink-0" />;
    if (kind === 'through') return <div className="w-[25px] shrink-0"><div className="ml-3 h-full border-l-2 border-white" /></div>;
    const ball = kind === 'plus' || kind === 'minus' || kind === 'minusEnd';
    const last = kind === 'elbow' || kind === 'minusEnd';
    return (
        <div className="relative flex w-[25px] shrink-0 flex-col">
            <div className="-mr-0.5 ml-3 h-[15px] shrink-0 border-b-2 border-l-2 border-white" />
            {!last && <div className="ml-3 flex-1 border-l-2 border-white" />}
            {ball && (
                <button
                    type="button"
                    aria-label={kind === 'plus' ? 'Développer' : 'Réduire'}
                    className="absolute top-[5px] left-[5px] size-4 rounded-full bg-radial-[at_35%_30%] from-[#d8d8d8] to-[#707070]"
                >
                    <svg viewBox="0 0 16 16" className="size-4" shapeRendering="crispEdges">
                        <path d={kind === 'plus' ? 'M3 7h10v3H3zM7 3h3v10H7z' : 'M3 7h10v3H3z'} />
                    </svg>
                </button>
            )}
        </div>
    );
}

function SpecTree() {
    return (
        <ul className="absolute top-[77px] -left-[2px] grid h-[566px] auto-rows-fr font-['Open_Sans','Noto_Sans',sans-serif] text-[17px] font-light text-white">
            {treeRows.map((row) => (
                <li key={row.label} className="flex min-h-0">
                    {row.cells.map((c, i) => <TreeCell key={i} kind={c} />)}
                    <div className="ml-[3px] flex w-[29px] shrink-0 flex-col">
                        <div className={clsx('-mt-0.5 h-[29px] shrink-0', (row.icon === hiddenPlane || row.icon === hiddenSketch) && dither)}>
                            {row.icon}
                        </div>
                        {row.open && <div className="ml-[9px] flex-1 border-l-2 border-white" />}
                    </div>
                    <span className="ml-1 h-6 self-center rounded-xs bg-[#343366] px-px leading-6 whitespace-nowrap">{row.label}</span>
                </li>
            ))}
        </ul>
    );
}

// Catmull-Rom through the sampled edge points of a window in the rim
function smooth(points: string) {
    const n = points.split(/\s+/).map(Number);
    const p: [number, number][] = [];
    for (let i = 0; i < n.length; i += 2) p.push([n[i], n[i + 1]]);
    let d = `M${p[0].join(' ')}`;
    for (let i = 0; i < p.length - 1; i++) {
        const a = p[Math.max(i - 1, 0)];
        const b = p[i];
        const c = p[i + 1];
        const e = p[Math.min(i + 2, p.length - 1)];
        d += `C${b[0] + (c[0] - a[0]) / 6} ${b[1] + (c[1] - a[1]) / 6} ${c[0] - (e[0] - b[0]) / 6} ${c[1] - (e[1] - b[1]) / 6} ${c.join(' ')}`;
    }
    return d;
}

const rimWindows = [
    smooth('872 204 882 270 880 330 865 387 838 443 800 490 760 519 714 527 668 517 630 490 590 443 562 387 549 315 546 265 558 204') + 'A537 537 0 0 1 872 204z',
    smooth('245 410 290 411 340 418 395 437 447 468 490 510 530 570 541 617 537 658 515 697 480 724 420 747 350 760 290 755 235 740 178 708 155 689') + 'A560 560 0 0 1 245 410z',
    smooth('1185 411 1150 410 1090 417 1035 437 980 472 935 517 898 573 887 617 891 658 913 697 945 724 1010 747 1077 760 1135 755 1195 738 1250 706 1273 689') + 'A560 560 0 0 0 1185 411z',
    smooth('278 1067 285 1040 312 985 350 936 395 895 460 862 518 848 562 849 607 870 637 905 651 945 654 1000 645 1065 618 1130 575 1190 540 1222 513 1239') + 'A560 560 0 0 1 278 1067z',
    smooth('1150 1067 1143 1040 1116 985 1075 936 1030 895 968 862 912 848 867 848 825 870 793 905 777 945 774 1000 783 1065 808 1130 850 1188 888 1222 914 1239') + 'A560 560 0 0 0 1150 1067z',
];

const bores = [[641, 616, 28], [786, 616, 28], [596, 754, 28], [831, 754, 28], [714, 840, 28], [714, 717, 67]]
    .map(([x, y, r]) => `M${x - r} ${y}a${r} ${r} 0 1 0 ${r * 2} 0a${r} ${r} 0 1 0 ${-r * 2} 0z`);

function Wheel() {
    return (
        <svg viewBox="0 0 1440 1440" className="absolute top-[81px] left-[427px] size-[480px]" fill="none" stroke="#fff" strokeWidth="6" shapeRendering="crispEdges">
            <path fill="#000" fillRule="evenodd" d={['M42 717a672 672 0 1 0 1344 0a672 672 0 1 0-1344 0z', ...rimWindows, ...bores].join('')} />
            <circle cx="714" cy="717" r="648" />
            <path d="M275 408A537 537 0 0 1 558 204M872 204A537 537 0 0 1 1155 408M178 708A537 537 0 0 0 285 1040M1250 708A537 537 0 0 1 1143 1040M540 1224A537 537 0 0 0 888 1224M394 126l8 21M1026 1286l10 22" />
        </svg>
    );
}

function Compass() {
    return (
        <svg viewBox="0 0 66 86" className="absolute top-0 right-[57px] h-[86px] w-[66px]" fontFamily="Noto Sans" fontSize="13">
            <defs>
                <pattern id="mesh" width="2" height="2" patternUnits="userSpaceOnUse">
                    <rect width="2" height="2" fill="#0a0a4c" />
                    <rect width="1" height="1" fill="#34346c" />
                </pattern>
            </defs>
            <path d="M44 18A34 34 0 0 0 10 52H44z" fill="url(#mesh)" stroke="#e0c8ff" strokeWidth="2" />
            <path d="M44 9V79M19 80H62" stroke="#e0c8ff" strokeWidth="2" />
            <circle cx="44" cy="9" r="4" fill="#e0c8ff" />
            <path d="M40 76h9v9h-9z" fill="#d00000" />
            <g fill="#ffff00">
                <text x="36" y="10">z</text>
                <text x="3" y="53">y</text>
                <text x="34" y="53">x</text>
            </g>
        </svg>
    );
}

function Manipulators() {
    return (
        <svg viewBox="0 0 106 210" className="absolute top-[201px] right-[7px] h-[210px] w-[106px]">
            <g fill="#fff" fillOpacity=".04" stroke="#fff" strokeOpacity=".23" strokeWidth="6">
                <circle cx="54" cy="39" r="35" />
                <rect x="22" y="89" width="64" height="64" />
                <rect x="4" y="168" width="98" height="38" />
            </g>
            <g fill="#fff" fillOpacity=".2">
                <circle cx="46" cy="58" r="7" />
                <path d="M30 134h11v11H30zM13 188l79 11H13z" />
            </g>
        </svg>
    );
}

function ViewAxes() {
    return (
        <svg viewBox="0 0 28 36" className="absolute right-[17px] bottom-4 h-9 w-7" fontFamily="Noto Sans" fontSize="13" fill="#fff">
            <path d="M19.500 14V30.500H5" fill="none" stroke="#fff" shapeRendering="crispEdges" />
            <text x="20" y="14">z</text>
            <text x="2" y="32">y</text>
        </svg>
    );
}

function AppIcon({ className }: { className?: string }) {
    return (
        <svg viewBox="0 0 18 16" className={clsx('h-4 shrink-0', className)} aria-hidden="true">
            <path d="M0 0h18v16H0z" fill="#05060c" />
            <path d="M0 2q9 3 10 14H7Q6 8 0 6z" fill="#2878c8" />
            <path d="M0 4q7 3 8 12H5Q4 10 0 8z" fill="#60b8f0" />
            <path d="M8 3l2 2 2-3 1 3 4 1-2 3 2 4-4-2-2 2-2-4-2-2z" fill="#d86018" />
            <path d="M10 5l3 0 1 3-2 1-2-1z" fill="#ffe070" />
        </svg>
    );
}

const menus = [
    ['F', 'ichier'], ['E', 'dition'], ['A', 'ffichage'], ['I', 'nsertion'], ['O', 'utils'], ['F', 'enêtre'], ['A', 'ide'],
];

const barBg = 'bg-[linear-gradient(#ffffff_0,#f4f4fb_3px,#d0d0e6_10px,#d0d0e6_22px,#9c9cb0_100%)]';

export default function App() {
    return (
        <div className="flex h-screen flex-col overflow-hidden bg-[#d0d0e6] font-['Open_Sans','Noto_Sans',sans-serif] text-[11px] text-black">
            {/* Title bar */}
            <header className="relative flex h-[22px] shrink-0 items-start border-b border-[#20242c] bg-[linear-gradient(90deg,#a8c0dc_0,#c4d8ee_120px,#b0c8e4_190px,#25303e_216px,#34465a_300px,#1c2630_340px,#2c3a48_480px,#607488_640px,#34424f_780px,#5c7084_1000px,#2a3440_1200px,#4a5866_100%)]">
                <div className="absolute inset-y-0 right-[180px] left-[287px] bg-[radial-gradient(ellipse_26px_18px_at_center,#a4d2f8_30%,transparent)] bg-[length:98px_36px] bg-repeat-x" />
                <AppIcon className="mt-0.5 w-4" />
                <h1 className="ml-[5px] text-xs leading-[22px]">CATIA V5 - [Part1.CATPart]</h1>
                <div className="relative mr-1 ml-auto flex h-[18px] rounded-b border border-t-0 border-[#20262e] text-white">
                    <button type="button" aria-label="Réduire la fenêtre" className="flex w-7 items-center justify-center border-r border-[#39424c] bg-linear-to-b from-[#a4b0bc] to-[#5c6874]">
                        <span className="h-1 w-3 border border-[#444] bg-white" />
                    </button>
                    <button type="button" aria-label="Restaurer la fenêtre" className="flex w-[27px] items-center justify-center border-r border-[#39424c] bg-linear-to-b from-[#a4b0bc] to-[#5c6874]">
                        <svg viewBox="0 0 12 12" className="size-3" fill="#fff" stroke="#444">
                            <path d="M4.500 .5h7v7h-3v4h-8v-7h4z" />
                            <path d="M3.500 6.500h3v3h-3zM4.500 4.500h4v3" fill="none" />
                        </svg>
                    </button>
                    <button type="button" aria-label="Fermer la fenêtre" className="flex w-[46px] items-center justify-center bg-linear-to-b from-[#d89080] via-[#c03c28] to-[#c85030]">
                        <svg viewBox="0 0 12 10" className="h-2.5 w-3">
                            <path d="M2 1l8 8M10 1L2 9" stroke="#433" strokeWidth="4" />
                            <path d="M2 1l8 8M10 1L2 9" stroke="#fff" strokeWidth="2.500" />
                        </svg>
                    </button>
                </div>
            </header>

            {/* Menu bar */}
            <nav className="flex h-5 shrink-0 items-center">
                <AppIcon className="ml-0.5 w-[18px]" />
                <button type="button" className="ml-px h-[18px] bg-[#fde0b0] px-[7px]">Démarrer</button>
                <button type="button" className="pr-3 pl-[7px]">ENOVIA V5 VPM</button>
                {menus.map(([key, rest]) => (
                    <button key={key + rest} type="button" className="pr-[18px] pl-[7px]">
                        <u className="underline-offset-2">{key}</u>{rest}
                    </button>
                ))}
                <div className="mr-0.5 ml-auto flex gap-0.5">
                    {['M4 11h7', 'M6 6V3h7v6h-3M3 7h7v5H3z', 'M4 4l7 8M11 4l-7 8'].map((d, i) => (
                        <button key={d} type="button" aria-label={['Réduire', 'Restaurer', 'Fermer'][i]} className="h-[17px] w-[17px] border border-[#b8ccdc] bg-linear-to-b from-white to-[#dceaf4]">
                            <svg viewBox="0 0 15 15" className="size-[15px]"><path d={d} fill="none" stroke="#7088a0" strokeWidth={i === 1 ? 1 : 2} /></svg>
                        </button>
                    ))}
                </div>
            </nav>

            {/* Main toolbar */}
            <div className={clsx('flex h-[37px] shrink-0 items-start overflow-hidden border-b-2 border-[#6c6c74] pt-1 pl-1', barBg)}>
                {topLeft.map((g) => <ToolGroup key={g.size} group={g} />)}
                <div className="flex w-[151px] shrink-0">
                    <div className="mr-[5px] h-4 w-[3px] shrink-0 border-r border-[#8c8c9c] bg-white" />
                    <ToolButton tool={['folder', 'Ouvrir un catalogue']} />
                    <div className="relative mt-1 ml-0.5 h-[21px] w-24 border border-[#8c8c94] bg-[#ececf2]">
                        <select aria-label="Filtre" className="size-full appearance-none pl-[3px] text-xs text-[#70707a]">
                            <option>Fichier</option>
                        </select>
                        <div className="pointer-events-none absolute inset-y-px right-px flex w-4 items-center justify-center border border-[#a8a8b4] bg-[#e8e8f0]">
                            <svg viewBox="0 0 7 4" className="h-1 w-[7px]"><path d="M0 0h7L3.500 4z" fill="#888" /></svg>
                        </div>
                    </div>
                </div>
                {topRight.map((g) => <ToolGroup key={g.size} group={g} />)}
                <div className="mr-1 ml-auto">
                    <Chevrons />
                </div>
            </div>

            <main className="flex min-h-0 flex-1">
                {/* Scrollbar */}
                <div className="flex w-[13px] shrink-0 flex-col border-l-2 border-[#a0a0a4] bg-[#7b7bff]">
                    <div className="flex h-[13px] shrink-0 items-center justify-center border-b border-white">
                        <svg viewBox="0 0 7 6" className="h-1.5 w-[7px]"><path d="M3.500 0L7 6H0z" /></svg>
                    </div>
                    <div className="flex-[444] border-b border-[#3c3c90]" />
                    <div className="flex-[158] bg-[repeating-conic-gradient(#7b7bff_0_25%,#70708c_0_50%)] bg-[length:2px_2px]" />
                    <div className="flex h-[13px] shrink-0 items-center justify-center border border-[#3c3c90]">
                        <svg viewBox="0 0 7 6" className="h-1.5 w-[7px]"><path d="M0 0h7L3.500 6z" /></svg>
                    </div>
                </div>

                {/* 3D view */}
                <section className="relative min-w-0 flex-1 overflow-hidden bg-[linear-gradient(#343366_0,#454575_66%,#adadc2_100%)]">
                    <SpecTree />
                    <Wheel />
                    <Compass />
                    <Manipulators />
                    <ViewAxes />
                    <div role="tooltip" className="absolute top-[556px] left-[753px] h-[19px] border border-[#50505c] bg-[#ffffe1] px-[3px] leading-[17px]">Vue de dos</div>
                </section>

                {/* Side toolbars */}
                <aside className="grid w-[78px] shrink-0 grid-cols-[40px_33px] border-l-2 border-[#e8e8f0] bg-[linear-gradient(90deg,#ffffff_0,#ffffff_3px,#d0d0e6_10px,#d0d0e6_66px,#9c9cb4_100%)] pl-[3px]">
                    <div className="flex min-h-0 flex-col pt-[15px]">
                        {sideA.map((g) => <SideGroup key={g.size} group={g} />)}
                    </div>
                    <div className="flex min-h-0 flex-col pt-[5px]">
                        {sideB.map((g) => <SideGroup key={g.tools[0][0]} group={g} />)}
                    </div>
                </aside>
            </main>

            {/* Bottom toolbar */}
            <div className={clsx('flex h-[38px] shrink-0 items-start overflow-hidden border-b border-[#50505c] pt-1.5 pl-1', barBg)}>
                {bottomTools.map((g) => <ToolGroup key={g.size} group={g} />)}
                <Chevrons />
                <svg viewBox="0 0 46 32" className="-mt-1 mr-0.5 ml-auto h-8 w-[46px]" fill="none" role="img" aria-label="CATIA">
                    <path d="M14 1q10-1 9 2-1 2-5 3 4 1 1 5" stroke="#e03020" strokeWidth="2" />
                    <path d="M7 12q10-2 8 3-3 6-13 6l5-6" stroke="#403090" strokeWidth="2" />
                    <path d="M29 10q-9-1-8 2l4 4q1 5-9 5" stroke="#f09020" strokeWidth="2" />
                    <text x="9" y="30" fontFamily="Liberation Sans" fontSize="10" fontWeight="bold" fontStyle="italic" fill="#352a80">CATIA</text>
                </svg>
            </div>

            {/* Status bar */}
            <footer className="flex h-[22px] shrink-0 items-stretch pl-[3px] leading-6">
                <output>Applique la vue de dos standard</output>
                <label htmlFor="command" className="mr-1 ml-auto">c:* dos</label>
                <input id="command" type="text" className="my-px w-[299px] border-t-2 border-l-2 border-[#606068] bg-white px-1" />
                {['M5 3h9v9H5zM18 5v9h-8', 'M11 4v7M8 3q-4 4 0 8h7q4-4 0-8zM4 14h14v-5'].map((d, i) => (
                    <button key={d} type="button" aria-label={['Mode dialogue', 'Informations'][i]} className="ml-0.5 flex w-8 items-center justify-center border border-t-white border-r-[#70707c] border-b-[#70707c] border-l-white">
                        <svg viewBox="0 0 22 17" className="h-[17px] w-[22px]" fill="none" shapeRendering="crispEdges">
                            <path d={d} stroke="#fff" strokeWidth="2" transform="translate(1 1)" />
                            <path d={d} stroke="#9898a4" strokeWidth="2" />
                        </svg>
                    </button>
                ))}
            </footer>
            <div className="h-0.5 shrink-0 border-t border-[#202830] bg-[#b8d0e0]" />
        </div>
    );
}
